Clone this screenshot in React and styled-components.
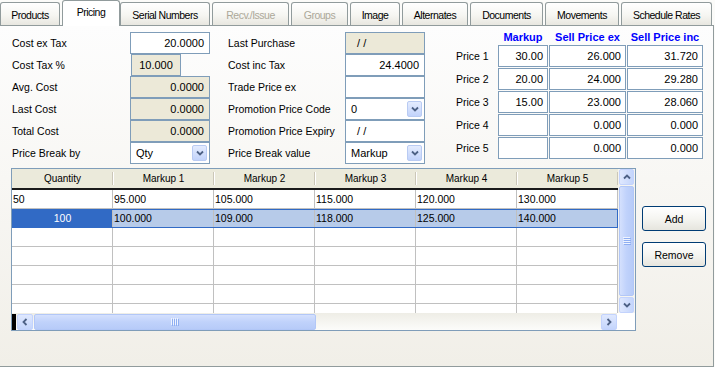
import React from 'react';
import styled, { createGlobalStyle, css } from 'styled-components';

const GlobalStyle = createGlobalStyle`
  body {
    margin: 0;
    background: #fbfbf9;
    font-family: "Liberation Sans", Arial, sans-serif;
    font-size: 11px;
    color: #000;
  }
`;

const Window = styled.div`
  width: 715px;
  height: 367px;
  overflow: hidden;
`;

const TabStrip = styled.div`
  display: flex;
  align-items: flex-end;
  height: 25px;
  position: relative;
  z-index: 1;
`;

const TabSlot = styled.div`
  flex: none;
  display: flex;
  align-items: flex-end;
  width: ${(p) => p.$w}px;
`;

const Tab = styled.div`
  flex: 1;
  height: 23px;
  margin-right: 2px;
  box-sizing: border-box;
  border: 1px solid #919b9c;
  border-bottom: none;
  border-radius: 3px 3px 0 0;
  background: linear-gradient(#ffffff, #f6f6f2 55%, #e8e7e0);
  display: flex;
  align-items: center;
  justify-content: center;
  padding-top: 1px;
  font-size: 10.5px;
  letter-spacing: -0.5px;
  white-space: nowrap;
  color: ${(p) => (p.$disabled ? '#aca899' : '#000')};

  ${(p) =>
    p.$active &&
    css`
      height: 26px;
      margin: 0 0 -1px 0;
      background: #fff;
      align-items: flex-start;
      padding-top: 5px;
    `}
`;

const Panel = styled.div`
  width: 714px;
  height: 342px;
  box-sizing: border-box;
  border: 1px solid #919b9c;
  border-left: none;
  background: linear-gradient(#fdfdfd, #f8f7f4 45%, #f1efe8);
  padding: 6px 0 0 11px;
`;

const TopSection = styled.div`
  display: flex;
  align-items: flex-start;
  height: 136px;
  padding-left: 1px;
`;

const FieldGrid = styled.div`
  display: grid;
  grid-template-columns: ${(p) => p.$label}px 80px;
  grid-auto-rows: 22px;
  align-items: center;
  margin-left: ${(p) => p.$offset || 0}px;
`;

const Label = styled.div`
  font-size: 10.5px;
  white-space: nowrap;
`;

const Field = styled.div`
  height: 22px;
  width: ${(p) => p.$w || 80}px;
  margin-left: ${(p) => p.$ml || 0}px;
  box-sizing: border-box;
  border: 1px solid #7f9db9;
  background: ${(p) => (p.$readonly ? '#ece9d8' : '#fff')};
  display: flex;
  align-items: center;
  justify-content: ${(p) => p.$align || 'flex-end'};
  padding: 0 ${(p) => (p.$select ? 2 : 5)}px 0 5px;
  font-size: 11px;
  white-space: pre;
`;

const SelectText = styled.span`
  flex: 1;
`;

const DropButton = styled.div`
  width: 15px;
  height: 16px;
  box-sizing: border-box;
  border: 1px solid #b9cbf3;
  border-radius: 2px;
  background: linear-gradient(#e4ecfe, #c2d3fb);
  display: flex;
  align-items: center;
  justify-content: center;
`;

const PriceGrid = styled.div`
  display: grid;
  grid-template-columns: 41px 50px 77px 76px;
  grid-template-rows: 13px repeat(5, 22px);
  column-gap: 1px;
  row-gap: 1px;
  margin: -1px 0 0 31px;
`;

const ColHead = styled.div`
  font-size: 11px;
  font-weight: bold;
  color: #0000ff;
  text-align: center;
  line-height: 13px;
  white-space: nowrap;
`;

const PriceLabel = styled.div`
  font-size: 10.5px;
  display: flex;
  align-items: center;
  white-space: nowrap;
`;

const PriceBox = styled.div`
  box-sizing: border-box;
  border: 1px solid #7f9db9;
  background: #fff;
  display: flex;
  align-items: center;
  justify-content: flex-end;
  padding-right: 4px;
  font-size: 11px;
`;

const BottomRow = styled.div`
  display: flex;
  align-items: flex-start;
`;

const GridBox = styled.div`
  width: 625px;
  height: 163px;
  box-sizing: border-box;
  border: 1px solid #7f9db9;
  background: #fff;
  display: flex;
  flex-direction: column;
`;

const GridBody = styled.div`
  display: flex;
  height: 144px;
`;

const Table = styled.div`
  width: 606px;
  overflow: hidden;
`;

const HeaderRow = styled.div`
  display: grid;
  grid-template-columns: repeat(6, 101px);
  height: 19px;
  border-bottom: 2px solid #1a1a1a;
  background: #ebeadb;
`;

const HeadCell = styled.div`
  position: relative;
  font-size: 10px;
  text-align: center;
  line-height: 19px;

  &::after {
    content: '';
    position: absolute;
    right: 0;
    top: 3px;
    bottom: 3px;
    width: 1px;
    background: #cbc7b8;
    box-shadow: 1px 0 0 #fff;
  }
`;

const DataRow = styled.div`
  display: grid;
  grid-template-columns: repeat(6, 101px);
  height: 19px;
  position: relative;
  background: ${(p) => (p.$selected ? '#b7cbe9' : '#fff')};

  ${(p) =>
    p.$selected &&
    css`
      &::after {
        content: '';
        position: absolute;
        inset: 0 0 0 0;
        border: 1px solid #316ac5;
        pointer-events: none;
      }
    `}
`;

const Cell = styled.div`
  box-sizing: border-box;
  border-right: 1px solid #c0c0c0;
  border-bottom: 1px solid #c0c0c0;
  padding-left: 1px;
  font-size: 10.5px;
  line-height: 18px;
  white-space: nowrap;

  ${(p) =>
    p.$focus &&
    css`
      background: #316ac5;
      color: #fff;
      text-align: center;
      box-shadow: inset 0 1px 0 #8fb0ea;
    `}
`;

const VScroll = styled.div`
  width: 17px;
  display: flex;
  flex-direction: column;
  background: #f5f4ef;
  box-sizing: border-box;
  padding: 0 1px 0 1px;
`;

const ArrowBtn = styled.div`
  flex: none;
  width: ${(p) => p.$w || 15}px;
  height: ${(p) => p.$h || 16}px;
  box-sizing: border-box;
  border: 1px solid #c3d3fd;
  border-radius: 2px;
  background: linear-gradient(${(p) => (p.$horiz ? '180deg' : '90deg')}, #dfe8fe, #c4d5fc);
  display: flex;
  align-items: center;
  justify-content: center;
`;

const VThumb = styled.div`
  flex: 1;
  margin: 1px 0;
  box-sizing: border-box;
  border: 1px solid #b2c7f7;
  border-radius: 2px;
  background: linear-gradient(90deg, #d4e0fd, #c0d2fb 50%, #b7cbf8);
  display: flex;
  align-items: center;
  justify-content: center;
`;

const HScroll = styled.div`
  display: flex;
  height: 17px;
`;

const HTrack = styled.div`
  width: 605px;
  display: flex;
  align-items: center;
  background: linear-gradient(#eeede6, #fcfcfa);
`;

const BlackNub = styled.div`
  width: 4px;
  height: 16px;
  background: #000;
  margin-right: 1px;
`;

const HThumb = styled.div`
  width: 282px;
  height: 16px;
  margin-left: 1px;
  box-sizing: border-box;
  border: 1px solid #b2c7f7;
  border-radius: 2px;
  background: linear-gradient(#d4e0fd, #c0d2fb 50%, #b7cbf8);
  display: flex;
  align-items: center;
  justify-content: center;
`;

const TrackFill = styled.div`
  flex: 1;
`;

const Corner = styled.div`
  flex: 1;
  background: #fff;
`;

const ButtonCol = styled.div`
  display: flex;
  flex-direction: column;
  gap: 11px;
  margin-left: 6px;
  padding-top: 38px;
`;

const Button = styled.button`
  width: 64px;
  height: 25px;
  padding: 0;
  border: 1px solid #003c74;
  border-radius: 3px;
  background: linear-gradient(#ffffff, #f5f5f1 50%, #e6e5de);
  font-family: "Liberation Sans", Arial, sans-serif;
  font-size: 10.5px;
  color: #000;
`;

const Chevron = ({ dir = 'down' }) => {
  const paths = {
    down: 'M1 1.5 L4 4.5 L7 1.5',
    up: 'M1 4.5 L4 1.5 L7 4.5',
  };
  if (dir === 'left' || dir === 'right') {
    const d = dir === 'left' ? 'M4.5 1 L1.5 4 L4.5 7' : 'M1.5 1 L4.5 4 L1.5 7';
    return (
      <svg width="6" height="8" viewBox="0 0 6 8">
        <path d={d} stroke="#4d6185" strokeWidth="1.8" fill="none" />
      </svg>
    );
  }
  return (
    <svg width="8" height="6" viewBox="0 0 8 6">
      <path d={paths[dir]} stroke="#4d6185" strokeWidth="1.8" fill="none" />
    </svg>
  );
};

const Grip = ({ vertical }) => (
  <svg width="8" height="8" viewBox="0 0 8 8">
    {[0, 2, 4, 6].map((o) =>
      vertical ? (
        <g key={o}>
          <rect x="0" y={o} width="7" height="1" fill="#eef3fe" />
          <rect x="1" y={o + 1} width="7" height="1" fill="#8eaef2" />
        </g>
      ) : (
        <g key={o}>
          <rect x={o} y="0" width="1" height="7" fill="#eef3fe" />
          <rect x={o + 1} y="1" width="1" height="7" fill="#8eaef2" />
        </g>
      )
    )}
  </svg>
);

const Select = ({ value }) => (
  <Field $select $align="flex-start">
    <SelectText>{value}</SelectText>
    <DropButton>
      <Chevron dir="down" />
    </DropButton>
  </Field>
);

const tabs = [
  { name: 'Products', w: 62 },
  { name: 'Pricing', w: 58, active: true },
  { name: 'Serial Numbers', w: 92 },
  { name: 'Recv./Issue', w: 79, disabled: true },
  { name: 'Groups', w: 59, disabled: true },
  { name: 'Image', w: 52 },
  { name: 'Alternates', w: 68 },
  { name: 'Documents', w: 75 },
  { name: 'Movements', w: 76 },
  { name: 'Schedule Rates', w: 93 },
];

const prices = [
  { label: 'Price 1', markup: '30.00', ex: '26.000', inc: '31.720' },
  { label: 'Price 2', markup: '20.00', ex: '24.000', inc: '29.280' },
  { label: 'Price 3', markup: '15.00', ex: '23.000', inc: '28.060' },
  { label: 'Price 4', markup: '', ex: '0.000', inc: '0.000' },
  { label: 'Price 5', markup: '', ex: '0.000', inc: '0.000' },
];

const columns = ['Quantity', 'Markup 1', 'Markup 2', 'Markup 3', 'Markup 4', 'Markup 5'];

const rows = [
  { qty: '50', vals: ['95.000', '105.000', '115.000', '120.000', '130.000'] },
  { qty: '100', vals: ['100.000', '109.000', '118.000', '125.000', '140.000'], selected: true },
  { qty: '', vals: ['', '', '', '', ''] },
  { qty: '', vals: ['', '', '', '', ''] },
  { qty: '', vals: ['', '', '', '', ''] },
  { qty: '', vals: ['', '', '', '', ''] },
  { qty: '', vals: ['', '', '', '', ''] },
];

export default function App() {
  return (
    <Window>
      <GlobalStyle />
      <TabStrip>
        {tabs.map((t) => (
          <TabSlot key={t.name} $w={t.w}>
            <Tab $active={t.active} $disabled={t.disabled}>
              {t.name}
            </Tab>
          </TabSlot>
        ))}
      </TabStrip>
      <Panel>
        <TopSection>
          <FieldGrid $label={118}>
            <Label>Cost ex Tax</Label>
            <Field>20.0000</Field>
            <Label>Cost Tax %</Label>
            <Field $readonly $w={50} $ml={1} $align="center">10.000</Field>
            <Label>Avg. Cost</Label>
            <Field $readonly>0.0000</Field>
            <Label>Last Cost</Label>
            <Field $readonly>0.0000</Field>
            <Label>Total Cost</Label>
            <Field $readonly>0.0000</Field>
            <Label>Price Break by</Label>
            <Select value="Qty" />
          </FieldGrid>

          <FieldGrid $label={117} $offset={18}>
            <Label>Last Purchase</Label>
            <Field $readonly $align="flex-start">{'  / /'}</Field>
            <Label>Cost inc Tax</Label>
            <Field>24.4000</Field>
            <Label>Trade Price ex</Label>
            <Field />
            <Label>Promotion Price Code</Label>
            <Select value="0" />
            <Label>Promotion Price Expiry</Label>
            <Field $align="flex-start">{'  / /'}</Field>
            <Label>Price Break value</Label>
            <Select value="Markup" />
          </FieldGrid>

          <PriceGrid>
            <div />
            <ColHead>Markup</ColHead>
            <ColHead>Sell Price ex</ColHead>
            <ColHead>Sell Price inc</ColHead>
            {prices.map((p) => (
              <React.Fragment key={p.label}>
                <PriceLabel>{p.label}</PriceLabel>
                <PriceBox>{p.markup}</PriceBox>
                <PriceBox>{p.ex}</PriceBox>
                <PriceBox>{p.inc}</PriceBox>
              </React.Fragment>
            ))}
          </PriceGrid>
        </TopSection>

        <BottomRow>
          <GridBox>
            <GridBody>
              <Table>
                <HeaderRow>
                  {columns.map((c) => (
                    <HeadCell key={c}>{c}</HeadCell>
                  ))}
                </HeaderRow>
                {rows.map((r, i) => (
                  <DataRow key={i} $selected={r.selected}>
                    <Cell $focus={r.selected}>{r.qty}</Cell>
                    {r.vals.map((v, j) => (
                      <Cell key={j}>{v}</Cell>
                    ))}
                  </DataRow>
                ))}
              </Table>
              <VScroll>
                <ArrowBtn $w={15} $h={16}>
                  <Chevron dir="up" />
                </ArrowBtn>
                <VThumb>
                  <Grip vertical />
                </VThumb>
                <ArrowBtn $w={15} $h={16}>
                  <Chevron dir="down" />
                </ArrowBtn>
              </VScroll>
            </GridBody>
            <HScroll>
              <HTrack>
                <BlackNub />
                <ArrowBtn $horiz $w={16} $h={16}>
                  <Chevron dir="left" />
                </ArrowBtn>
                <HThumb>
                  <Grip />
                </HThumb>
                <TrackFill />
                <ArrowBtn $horiz $w={16} $h={16}>
                  <Chevron dir="right" />
                </ArrowBtn>
              </HTrack>
              <Corner />
            </HScroll>
          </GridBox>
          <ButtonCol>
            <Button>Add</Button>
            <Button>Remove</Button>
          </ButtonCol>
        </BottomRow>
      </Panel>
    </Window>
  );
}
